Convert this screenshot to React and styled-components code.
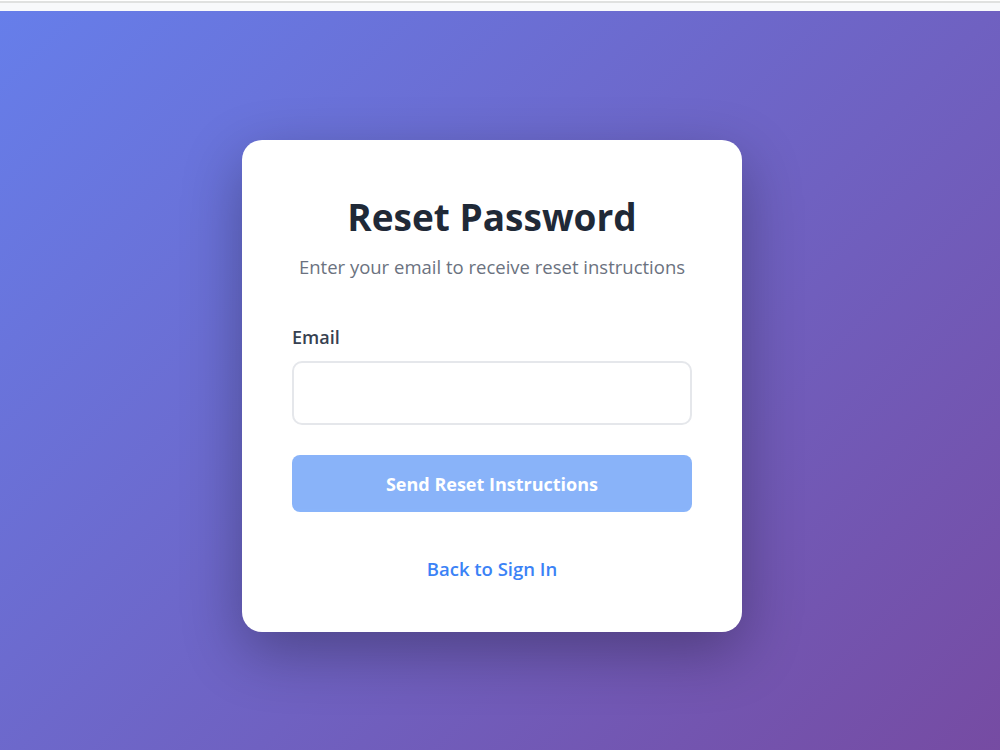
import styled, { createGlobalStyle } from 'styled-components'

const GlobalStyle = createGlobalStyle`
  * {
    box-sizing: border-box;
  }
  body {
    margin: 0;
    font-family: 'Open Sans', 'Noto Sans', sans-serif;
  }
`

const BrowserStrip = styled.div`
  height: 11px;
  border-top: 1px solid #ffffff;
  border-bottom: 8px solid #f8f9fb;
  background-color: #e0e1e0;
`

// content is centred as if a 16px scrollbar took the right edge
const Page = styled.main`
  min-height: 750px;
  padding-right: 16px;
  display: flex;
  align-items: center;
  justify-content: center;
  background: linear-gradient(135deg, #667eea 0%, #764ba2 100%);
`

const Card = styled.div`
  width: 500px;
  padding: 52px 50px 51px;
  background-color: white;
  border-radius: 20px;
  box-shadow: 0 20px 60px rgba(0, 0, 0, 0.3);
`

const Title = styled.h1`
  margin: 0;
  text-align: center;
  font-size: 37px;
  line-height: 50px;
  font-weight: 700;
  color: #1f2937;
`

const Subtitle = styled.p`
  margin: 12px 0 0;
  text-align: center;
  font-size: 18.5px;
  color: #6b7280;
`

const Field = styled.div`
  margin-top: 46px;
  display: flex;
  flex-direction: column;
  gap: 12px;
`

const Label = styled.label`
  font-size: 18px;
  font-weight: 600;
  color: #374151;
`

const Input = styled.input`
  height: 64px;
  border: 2px solid #e5e7eb;
  border-radius: 10px;
  padding: 0 16px;
  font-size: 16px;
  outline: none;
`

const SubmitButton = styled.button`
  margin-top: 30px;
  width: 100%;
  height: 57px;
  border: none;
  border-radius: 8px;
  background-color: #3b82f6;
  color: white;
  font-family: inherit;
  font-size: 18px;
  font-weight: 700;
  ${(props) => props.disabled && `opacity: 0.6;`}
`

const Footer = styled.div`
  margin-top: 44px;
  text-align: center;
`

const BackLink = styled.a`
  color: #3b82f6;
  font-size: 18.5px;
  font-weight: 600;
  text-decoration: none;
`

function App() {
  return (
    <>
      <GlobalStyle />
      <BrowserStrip />
      <Page>
        <Card>
          <Title>Reset Password</Title>
          <Subtitle>Enter your email to receive reset instructions</Subtitle>
          <Field>
            <Label htmlFor="email">Email</Label>
            <Input id="email" type="email" />
          </Field>
          <SubmitButton disabled>Send Reset Instructions</SubmitButton>
          <Footer>
            <BackLink href="#">Back to Sign In</BackLink>
          </Footer>
        </Card>
      </Page>
    </>
  )
}

export default App
